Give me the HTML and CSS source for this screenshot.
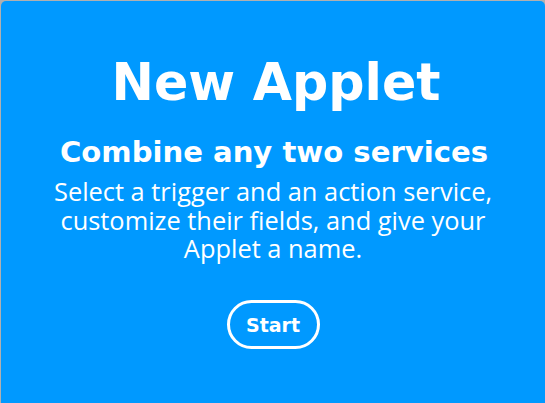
FILE: index.html
```html
<!DOCTYPE html>
<html lang="en">
<head>
<meta charset="utf-8">
<title>New Applet</title>
<link rel="stylesheet" href="styles.css">
</head>
<body>
<main class="card">
  <h1 class="title">New Applet</h1>
  <h2 class="subtitle">Combine any two services</h2>
  <p class="desc"><span class="line">Select a trigger and an action service,</span><span class="line">customize their fields, and give your</span><span class="line">Applet a name.</span></p>
  <button class="start" type="button">Start</button>
</main>
</body>
</html>
```
FILE: styles.css
```css
html, body {
  margin: 0;
  padding: 0;
  background: #b0b0b0;
  overflow: hidden;
}
body {
  padding: 1px 0 0 1px;
}
.card {
  box-sizing: border-box;
  width: 544px;
  height: 402px;
  background: #0099ff;
  border-radius: 5px 5px 0 0;
  color: #fff;
  display: flex;
  flex-direction: column;
  align-items: center;
  text-align: center;
  padding-top: 52px;
}
.title {
  margin: 0 0 0 6px;
  font-family: "DejaVu Sans", sans-serif;
  font-size: 50.7px;
  font-weight: 700;
  line-height: 60px;
  white-space: nowrap;
}
.subtitle {
  margin: 22px 0 0 2px;
  font-family: "DejaVu Sans", sans-serif;
  font-size: 29.1px;
  font-weight: 700;
  line-height: 34px;
  white-space: nowrap;
}
.desc {
  margin: 8px 0 0;
  display: flex;
  flex-direction: column;
  align-items: center;
  font-family: "Open Sans", sans-serif;
  font-size: 25.4px;
  font-weight: 400;
  white-space: nowrap;
}
.line {
  display: block;
  line-height: 28.5px;
}
.start {
  margin-top: 37.5px;
  width: 93px;
  height: 49px;
  border: 3px solid #fff;
  border-radius: 25px;
  background: transparent;
  color: #fff;
  font-family: "DejaVu Sans", sans-serif;
  font-size: 19px;
  font-weight: 700;
  padding: 0;
}
```
